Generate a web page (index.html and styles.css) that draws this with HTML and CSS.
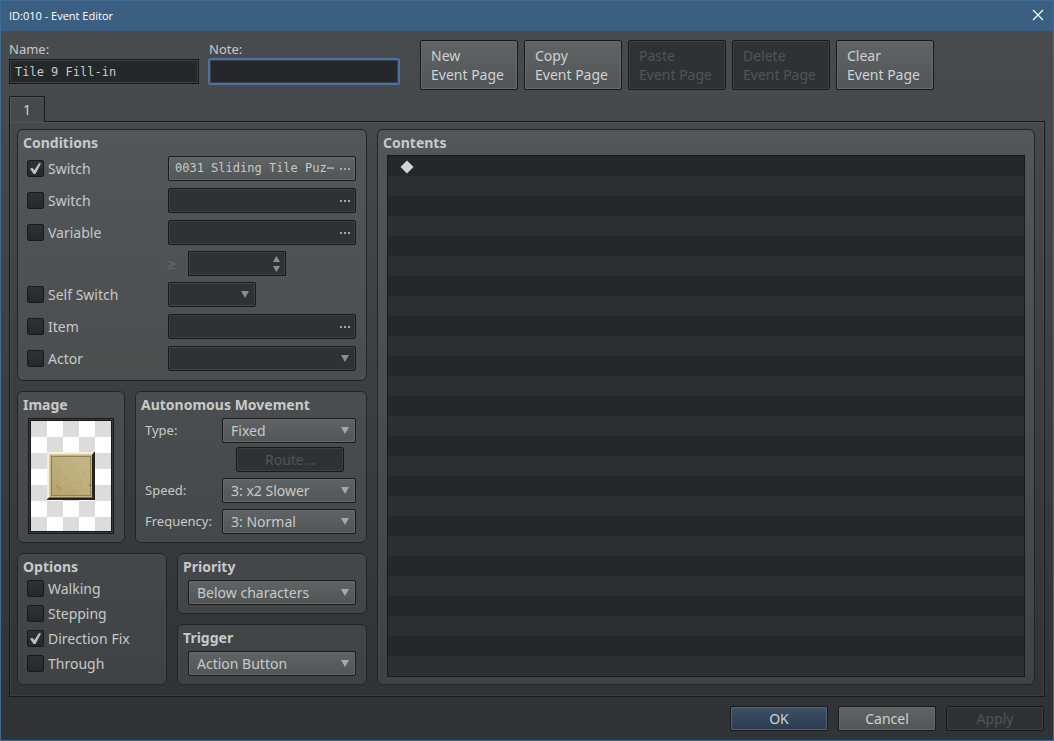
FILE: index.html
```html
<!DOCTYPE html>
<html lang="en">
<head>
  <meta charset="UTF-8" />
  <meta name="viewport" content="width=device-width, initial-scale=1.0" />
  <title>ID:010 - Event Editor</title>
  <link rel="stylesheet" href="styles.css">
</head>
<body>
  <div class="window">
    <header class="titlebar">
      <span>ID:010 - Event Editor</span>
      <button class="close" type="button" aria-label="Close">
        <svg width="12" height="12" viewBox="0 0 12 12"><path d="M1 1l10 10M11 1L1 11" stroke="#fff" stroke-width="1.2" fill="none" /></svg>
      </button>
    </header>

    <div class="toolbar">
      <div class="field">
        <label for="name">Name:</label>
        <input type="text" id="name" value="Tile 9 Fill-in" />
      </div>
      <div class="field">
        <label for="note">Note:</label>
        <input type="text" id="note" class="focused" />
      </div>
      <div class="page-buttons">
        <button type="button">New<br>Event Page</button>
        <button type="button">Copy<br>Event Page</button>
        <button type="button" disabled>Paste<br>Event Page</button>
        <button type="button" disabled>Delete<br>Event Page</button>
        <button type="button">Clear<br>Event Page</button>
      </div>
    </div>

    <div class="tabs">
      <button class="tab" type="button">1</button>
    </div>

    <main class="page">
      <div class="settings">
        <section class="group conditions">
          <h2>Conditions</h2>
          <div class="row">
            <label class="check"><input type="checkbox" checked />Switch</label>
            <button class="picker" type="button" aria-label="Switch 1"><span>0031 Sliding Tile Puz⋯</span><i class="dots"></i></button>
          </div>
          <div class="row">
            <label class="check"><input type="checkbox" />Switch</label>
            <button class="picker" type="button" aria-label="Switch 2" disabled><i class="dots"></i></button>
          </div>
          <div class="row">
            <label class="check"><input type="checkbox" />Variable</label>
            <button class="picker" type="button" aria-label="Variable" disabled><i class="dots"></i></button>
          </div>
          <div class="row tight">
            <span></span>
            <div class="compare">
              <label for="amount">≥</label>
              <div class="spinner"><input type="number" id="amount" disabled /></div>
            </div>
          </div>
          <div class="row">
            <label class="check"><input type="checkbox" />Self Switch</label>
            <div class="select short"><select aria-label="Self Switch" disabled><option></option></select></div>
          </div>
          <div class="row">
            <label class="check"><input type="checkbox" />Item</label>
            <button class="picker" type="button" aria-label="Item" disabled><i class="dots"></i></button>
          </div>
          <div class="row">
            <label class="check"><input type="checkbox" />Actor</label>
            <div class="select"><select aria-label="Actor" disabled><option></option></select></div>
          </div>
        </section>

        <div class="pair">
          <section class="group image">
            <h2>Image</h2>
            <button class="preview" type="button" aria-label="Event image">
              <svg width="48" height="48" viewBox="0 0 48 48">
                <defs>
                  <linearGradient id="stone" x1="1" y1="0" x2="0" y2="1">
                    <stop offset="0" stop-color="#c4b68a" />
                    <stop offset="0.5" stop-color="#bdae7c" />
                    <stop offset="1" stop-color="#b5a36c" />
                  </linearGradient>
                </defs>
                <rect width="48" height="48" fill="#25231f" />
                <path d="M0 0h47l-2 3H3v42l-3 2z" fill="#f5eedb" />
                <path d="M2 46l2-2h41l1 2z" fill="#736b43" />
                <rect x="2" y="2" width="43" height="43" fill="#d9cda6" />
                <rect x="3" y="3" width="42" height="42" fill="#c3b583" />
                <rect x="4" y="4" width="40" height="40" fill="#8f8450" />
                <rect x="5" y="5" width="38" height="38" fill="url(#stone)" />
                <g fill="#b09d66">
                  <path d="M9 32h3v3h3v3h-5v-2H9zM17 26h2v1h-2zM31 30h3v1h-3zM24 39h3v1h-3zM12 16h1v2h-1zM36 21h2v1h-2zM22 34h2v1h-2z" />
                </g>
                <g fill="#cabd92">
                  <path d="M27 8h3v1h-3zM34 13h3v1h-3zM10 10h2v1h-2zM20 19h2v1h-2zM28 23h1v1h-1zM37 35h2v1h-2zM30 17h1v2h-1zM15 30h2v1h-2z" />
                </g>
                <path d="M43 32h1v2h-2v-1h1z" fill="#5b5d70" />
              </svg>
            </button>
          </section>

          <section class="group movement">
            <h2>Autonomous Movement</h2>
            <div class="line">
              <label for="type">Type:</label>
              <div class="select"><select id="type"><option>Fixed</option></select></div>
            </div>
            <button class="route" type="button" disabled>Route...</button>
            <div class="line">
              <label for="speed">Speed:</label>
              <div class="select"><select id="speed"><option>3: x2 Slower</option></select></div>
            </div>
            <div class="line">
              <label for="frequency">Frequency:</label>
              <div class="select"><select id="frequency"><option>3: Normal</option></select></div>
            </div>
          </section>
        </div>

        <div class="pair">
          <section class="group options">
            <h2>Options</h2>
            <label class="check"><input type="checkbox" />Walking</label>
            <label class="check"><input type="checkbox" />Stepping</label>
            <label class="check"><input type="checkbox" checked />Direction Fix</label>
            <label class="check"><input type="checkbox" />Through</label>
          </section>

          <div class="stack">
            <section class="group">
              <h2><label for="priority">Priority</label></h2>
              <div class="select"><select id="priority"><option>Below characters</option></select></div>
            </section>
            <section class="group">
              <h2><label for="trigger">Trigger</label></h2>
              <div class="select"><select id="trigger"><option>Action Button</option></select></div>
            </section>
          </div>
        </div>
      </div>

      <section class="group contents">
        <h2>Contents</h2>
        <ul class="commands">
          <li><svg width="14" height="14" viewBox="0 0 14 14"><path d="M7 0.5L13.5 7 7 13.5 0.5 7z" fill="#d4d4d4" /></svg></li>
        </ul>
      </section>
    </main>

    <footer class="actions">
      <button class="primary" type="button">OK</button>
      <button type="button">Cancel</button>
      <button type="button" disabled>Apply</button>
    </footer>
  </div>
</body>
</html>
```
FILE: styles.css
```css
* {
  box-sizing: border-box;
}

body {
  margin: 0;
  font-family: "Noto Sans", sans-serif;
  font-size: 14px;
  line-height: 19px;
  color: #c8c9c9;
}

.window {
  display: flex;
  flex-direction: column;
  min-height: 100vh;
  border: 1px solid #426b94;
  background: linear-gradient(#484b4d 30px, #46494b 120px, #303436 680px);
}

.titlebar {
  display: flex;
  justify-content: space-between;
  align-items: center;
  height: 30px;
  padding: 0 9px 2px 8px;
  background: #3b5f82;
  color: #fff;
  font-family: "Open Sans", sans-serif;
  font-size: 11px;
}

/* buttons */

button {
  height: 25px;
  padding: 0;
  border: 1px solid #17191b;
  border-radius: 2px;
  background: linear-gradient(#606466, #515556);
  box-shadow: inset 0 0 0 1px #666a6c;
  color: #d0d1d1;
  font: inherit;
}

button:disabled {
  background: #2f3234;
  box-shadow: inset 0 0 0 1px #3d4042;
  color: #515455;
}

.titlebar .close {
  display: flex;
  align-items: center;
  border: none;
  background: none;
  box-shadow: none;
}

.primary {
  background: linear-gradient(#3c5068, #2c3b50);
  box-shadow: inset 0 0 0 1px #52647a;
}

/* toolbar */

.toolbar {
  display: flex;
  gap: 10px;
  padding: 9px 8px 6px;
}

.field {
  display: flex;
  flex-direction: column;
  width: 190px;
}

.field label {
  font-size: 13px;
}

.field input {
  height: 25px;
  padding: 0 5px;
  border: 1px solid #17191b;
  background: #25282a;
  box-shadow: inset 0 0 0 1px #3d4042;
  color: #c8c9c9;
  font-family: "DejaVu Sans Mono", monospace;
  font-size: 12px;
}

.field input.focused {
  outline: 2px solid #4a72a3;
  outline-offset: -1px;
  border-radius: 1px;
}

.page-buttons {
  display: flex;
  gap: 6px;
  margin-left: 11px;
}

.page-buttons button {
  width: 98px;
  height: 50px;
  padding: 0 0 0 10px;
  text-align: left;
}

/* tab and page */

.tabs {
  padding-left: 8px;
}

.tab {
  position: relative;
  display: block;
  width: 36px;
  height: 26px;
  margin-bottom: -1px;
  border-bottom: none;
  border-radius: 2px 2px 0 0;
  background: #46494b;
  box-shadow: inset 1px 1px 0 #55585a;
}

.page {
  display: flex;
  flex: 1;
  gap: 10px;
  margin: 0 8px;
  padding: 7px 9px 11px 7px;
  border: 1px solid #17191b;
  box-shadow: inset 0 0 0 1px rgba(255, 255, 255, 0.06);
}

.settings {
  display: flex;
  flex-direction: column;
  gap: 10px;
  width: 350px;
}

.pair {
  display: flex;
  gap: 10px;
}

.group {
  padding: 0 10px 8px;
  border: 1px solid #212426;
  border-radius: 6px;
  background: rgba(255, 255, 255, 0.08);
}

.group h2 {
  margin: 0 -5px 1px;
  font-size: 14px;
  line-height: 25px;
}

/* check boxes */

.check {
  display: flex;
  align-items: center;
  gap: 4px;
}

.check input {
  appearance: none;
  width: 17px;
  height: 17px;
  margin: 0;
  border: 1px solid #17191b;
  border-radius: 2px;
  background: linear-gradient(#2f3234, #25282a);
}

.check input:checked::before {
  content: "";
  display: block;
  width: 11px;
  height: 11px;
  margin: 2px;
  background: #bcbdbf;
  clip-path: polygon(0 52%, 20% 44%, 40% 64%, 82% 0, 100% 4%, 50% 100%, 32% 100%);
}

/* drop-downs */

.select {
  position: relative;
}

.select select {
  appearance: none;
  display: block;
  width: 100%;
  height: 25px;
  padding: 0 24px 0 8px;
  border: 1px solid #17191b;
  border-radius: 2px;
  background: linear-gradient(#5f6365, #515556);
  box-shadow: inset 0 0 0 1px #65696b;
  color: #c8c9c9;
  font: inherit;
  opacity: 1;
}

.select select:disabled {
  background: #2f3234;
  box-shadow: inset 0 0 0 1px #434648;
}

.select::after {
  content: "";
  position: absolute;
  top: 9px;
  right: 7px;
  width: 8px;
  height: 7px;
  background: #a5a7a8;
  clip-path: polygon(0 0, 100% 0, 50% 100%);
  pointer-events: none;
}

.select:has(:disabled)::after {
  background: #8b8d8e;
}

/* conditions */

.conditions {
  padding-bottom: 9px;
}

.row {
  display: grid;
  grid-template-columns: 141px 1fr;
  align-items: center;
  margin: 0 0 7px -1px;
}

.row.tight,
.row:has(+ .tight) {
  margin-bottom: 6px;
}

.row:last-child {
  margin-bottom: 0;
}

.row .select.short {
  width: 88px;
}

.picker {
  display: flex;
  align-items: center;
  justify-content: flex-end;
  padding: 0 5px 0 6px;
  color: #c8c9c9;
  font-family: "DejaVu Sans Mono", monospace;
  font-size: 12px;
}

.picker span {
  flex: 1;
  text-align: left;
  white-space: nowrap;
}

.dots {
  width: 10px;
  height: 2px;
  background: repeating-linear-gradient(90deg, #a5a7a8 0 2px, transparent 2px 4px);
}

.compare {
  display: flex;
  align-items: center;
}

.compare label {
  width: 20px;
  color: #686b6c;
}

.spinner {
  position: relative;
  width: 98px;
}

.spinner input {
  appearance: textfield;
  display: block;
  width: 100%;
  height: 25px;
  border: 1px solid #17191b;
  background: #2f3234;
  box-shadow: inset 0 0 0 1px #3d4042;
}

.spinner::before,
.spinner::after {
  content: "";
  position: absolute;
  right: 6px;
  width: 7px;
  height: 6px;
  background: #8b8d8e;
}

.spinner::before {
  top: 5px;
  clip-path: polygon(50% 0, 100% 100%, 0 100%);
}

.spinner::after {
  bottom: 4px;
  clip-path: polygon(0 0, 100% 0, 50% 100%);
}

/* image */

.image {
  width: 108px;
}

.preview {
  display: flex;
  align-items: center;
  justify-content: center;
  width: 86px;
  height: 116px;
  padding: 0;
  border-radius: 0;
  box-shadow: inset 0 0 0 1px #383b3d, inset 0 0 0 2px #17191b;
  background: conic-gradient(#fff 25%, #dcdcdc 0 50%, #fff 0 75%, #dcdcdc 0) 2px 2px / 32px 32px;
}

/* movement */

.movement {
  flex: 1;
}

.line {
  display: grid;
  grid-template-columns: 77px 1fr;
  align-items: center;
  margin: 0 0 6px -1px;
}

.line label {
  font-size: 13px;
}

.line:last-child {
  margin-bottom: 0;
}

.route {
  display: block;
  width: 108px;
  margin: -2px 0 6px 90px;
}

/* options */

.options {
  width: 150px;
  padding-bottom: 4px;
}

.options .check {
  height: 17px;
  margin: 0 0 8px -1px;
}

.stack {
  display: flex;
  flex: 1;
  flex-direction: column;
  gap: 10px;
}

/* contents */

.contents {
  display: flex;
  flex: 1;
  flex-direction: column;
  padding: 0 9px 7px;
}

.contents h2 {
  margin: 0 -4px;
}

.commands {
  flex: 1;
  margin: 0;
  padding: 0 12px;
  border: 1px solid #17191b;
  background: repeating-linear-gradient(#25282a 0 20px, #2d3032 20px 40px);
  list-style: none;
}

.commands li {
  display: flex;
  align-items: center;
  height: 22px;
}

/* bottom buttons */

.actions {
  display: flex;
  justify-content: flex-end;
  gap: 10px;
  padding: 9px;
}

.actions button {
  width: 98px;
}
```
